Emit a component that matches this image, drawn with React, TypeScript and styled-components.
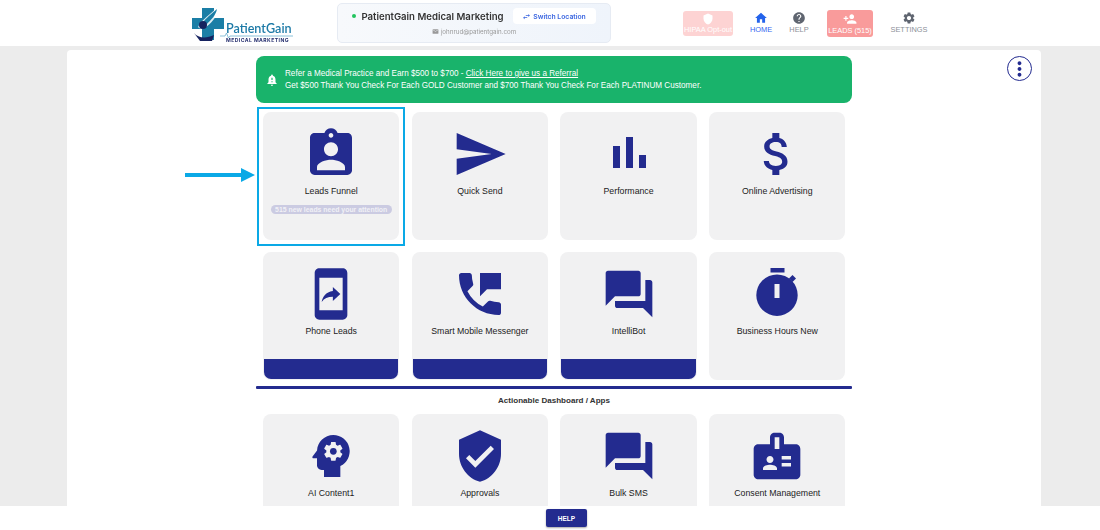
import React from "react";
import styled, { createGlobalStyle } from "styled-components";
import {
  MdAssignmentInd, MdSend, MdAttachMoney, MdMobileScreenShare, MdPermPhoneMsg,
  MdForum, MdPsychology, MdVerifiedUser, MdBadge, MdHome, MdHelp, MdPersonAdd,
  MdSettings, MdShield, MdNotificationImportant, MdSwapHoriz, MdEmail, MdMoreVert,
} from "react-icons/md";

const navy = "#232b8f";

const Global = createGlobalStyle`
  html, body { margin: 0; padding: 0; height: 100%; overflow: hidden; background: #fff; }
  body { font-family: "Liberation Sans", Arial, sans-serif; color: #222; }
  * { box-sizing: border-box; }
`;

const Page = styled.div`
  width: 1100px;
  height: 530px;
  display: flex;
  flex-direction: column;
  overflow: hidden;
`;

const Header = styled.header`
  height: 46px;
  flex: none;
  background: #fff;
  display: flex;
  align-items: center;
  padding-left: 190px;
`;

const LogoSvg = styled.svg`
  width: 104px;
  height: 40px;
  flex: none;
  filter: blur(0.3px);
`;

const LocationCard = styled.div`
  width: 274px;
  height: 40px;
  margin-left: 43px;
  flex: none;
  border: 1px solid #e6ebf3;
  border-radius: 5px;
  background: linear-gradient(90deg, #f7f9fc, #eff4fb);
  display: flex;
  flex-direction: column;
  align-items: center;
  padding-top: 4px;
  gap: 4px;
`;

const LocationRow = styled.div`
  display: flex;
  align-items: center;
`;

const Dot = styled.span`
  width: 4px;
  height: 4px;
  border-radius: 50%;
  background: #22c55e;
  margin-right: 5px;
`;

const LocationName = styled.span`
  font-family: Inter, sans-serif;
  font-size: 9.6px;
  font-weight: 600;
  color: #333;
  filter: blur(0.3px);
`;

const SwitchButton = styled.span`
  margin-left: 9px;
  width: 83px;
  height: 16px;
  background: #fff;
  border-radius: 4px;
  color: #3b66e0;
  font-family: Inter, sans-serif;
  font-size: 6.8px;
  font-weight: 600;
  display: flex;
  align-items: center;
  justify-content: center;
  gap: 2px;
  filter: blur(0.25px);
`;

const LocationEmail = styled.span`
  font-family: Inter, sans-serif;
  font-size: 6.2px;
  color: #999;
  display: flex;
  align-items: center;
  gap: 2px;
  filter: blur(0.4px);
`;

const HipaaBox = styled.div`
  width: 50px;
  height: 25px;
  margin-left: 72px;
  flex: none;
  border-radius: 3px;
  background: #fdd3d3;
  color: #fff;
  font-size: 7.4px;
  line-height: 9px;
  display: flex;
  flex-direction: column;
  align-items: center;
  justify-content: center;
`;

const NavItem = styled.div<{ $active?: boolean; $w: number; $ml: number }>`
  width: ${(p) => p.$w}px;
  margin-left: ${(p) => p.$ml}px;
  flex: none;
  display: flex;
  flex-direction: column;
  align-items: center;
  font-size: 7.4px;
  line-height: 9px;
  margin-top: -2px;
  color: ${(p) => (p.$active ? "#3466f0" : "#8b8f97")};
  svg { color: ${(p) => (p.$active ? "#2463eb" : "#5f6570")}; }
`;

const LeadsBox = styled.div`
  width: 46px;
  height: 27px;
  margin-left: 16px;
  flex: none;
  border-radius: 3px;
  background: #f99b9b;
  color: #fff;
  font-size: 7.4px;
  line-height: 9px;
  display: flex;
  flex-direction: column;
  align-items: center;
  justify-content: center;
`;

const Main = styled.main`
  height: 460px;
  flex: none;
  background: #ececec;
  padding: 4px 59px 0 67px;
  overflow: hidden;
`;

const Panel = styled.div`
  position: relative;
  height: 100%;
  background: #fff;
  border-radius: 4px 4px 0 0;
  overflow: hidden;
  padding-top: 6px;
`;

const MenuButton = styled.button`
  position: absolute;
  top: 6px;
  right: 9px;
  width: 25px;
  height: 25px;
  padding: 0;
  border: 1px solid ${navy};
  border-radius: 50%;
  background: #fff;
  color: ${navy};
  display: flex;
  align-items: center;
  justify-content: center;
`;

const Column = styled.div`
  width: 596px;
  margin: 0 auto;
`;

const Banner = styled.div`
  height: 47px;
  border-radius: 8px;
  background: #19b36b;
  color: #fff;
  display: flex;
  align-items: center;
  padding-left: 9px;
  gap: 6px;
  font-size: 8.14px;
  line-height: 11.5px;
  a { color: #fff; text-decoration: underline; }
`;

const Grid = styled.div`
  display: grid;
  grid-template-columns: repeat(4, 136.4px);
  column-gap: 12.3px;
  row-gap: 12px;
  padding-left: 7px;
`;

const TopGrid = styled(Grid)`
  margin-top: 9px;
`;

const Card = styled.div`
  position: relative;
  height: 128px;
  border-radius: 8px;
  background: #f1f1f2;
  display: flex;
  flex-direction: column;
  align-items: center;
  padding-top: 14px;
  color: ${navy};
`;

const CardLabel = styled.div`
  margin-top: 3px;
  font-size: 8.75px;
  line-height: 12px;
  color: #222;
`;

const Badge = styled.div`
  margin-top: 8px;
  width: 121px;
  height: 9px;
  border-radius: 5px;
  background: #cbcbe2;
  color: #f1f1f6;
  font-size: 6.9px;
  font-weight: 700;
  line-height: 9px;
  text-align: center;
  white-space: nowrap;
`;

const CardFoot = styled.div`
  position: absolute;
  left: 1px;
  right: 1px;
  bottom: 1px;
  height: 20px;
  background: ${navy};
  border-radius: 0 0 7px 7px;
`;

const Highlight = styled.div`
  position: absolute;
  left: -6px;
  right: -6px;
  top: -5px;
  bottom: -6px;
  border: 2px solid #0aa9e6;
  pointer-events: none;
`;

const ArrowSvg = styled.svg`
  position: absolute;
  left: -78px;
  top: 56px;
  width: 70px;
  height: 14px;
`;

const Divider = styled.div`
  height: 3px;
  margin-top: 6px;
  background: ${navy};
  border-radius: 1px;
`;

const SectionLabel = styled.div`
  margin: 7px 0 8px;
  height: 10px;
  font-size: 8.05px;
  font-weight: 700;
  line-height: 10px;
  text-align: center;
  color: #333;
`;

const Footer = styled.footer`
  height: 24px;
  flex: none;
  background: #fff;
  display: flex;
  justify-content: center;
  padding: 3px 0 0 33px;
`;

const HelpButton = styled.button`
  width: 41px;
  height: 18px;
  padding: 0;
  border: none;
  border-radius: 2px;
  background: ${navy};
  color: #fff;
  font-family: "Liberation Sans", sans-serif;
  font-size: 6.5px;
  font-weight: 700;
  box-shadow: 0 1px 2px rgba(0, 0, 0, 0.35);
`;

const Logo = () => (
  <LogoSvg viewBox="0 0 104 40">
    <path d="M12 2h12v10h10v11H24v11H12V23H2V12h10z" transform="translate(0 3)" fill="#1b7ea6" />
    <path d="M4 30c4 5 12 6 20 2l-2 6H10z" fill="#16225f" />
    <path d="M8 24c4-8 12-12 22-22-1 8-6 16-14 22-3 2-6 2-8 0z" fill="#fff" opacity=".85" />
    <path d="M11 22c3-5 8-9 16-16-1 6-6 11-11 16z" fill="#1b7ea6" />
    <circle cx="13" cy="22" r="4" fill="#16225f" />
    <path d="M30 33h5l1.5-3 2 5 1.500-2H103" fill="none" stroke="#5aa6c8" strokeWidth=".7" />
    <text x="36" y="29.500" fontFamily="Lato, sans-serif" fontSize="12.600" fontWeight="600" fill="#1b79a6">PatientGain</text>
    <text x="36" y="39" fontFamily="Inter, sans-serif" fontSize="5.100" fontWeight="700" letterSpacing=".43" fill="#27306f">MEDICAL MARKETING</text>
  </LogoSvg>
);

const BarsIcon = ({ size }: { size: number }) => (
  <svg width={size} height={size} viewBox="0 0 56 56" fill="currentColor">
    <rect x="12" y="20" width="7" height="22" />
    <rect x="25" y="11" width="7" height="31" />
    <rect x="38" y="29" width="7" height="13" />
  </svg>
);

const StopwatchIcon = ({ size }: { size: number }) => (
  <svg width={size} height={size} viewBox="0 0 56 56" fill="currentColor">
    <rect x="21.500" y="2" width="14" height="4.500" />
    <rect x="41" y="10" width="5" height="5" transform="rotate(45 43.500 12.500)" />
    <path fillRule="evenodd" d="M28 8.500a20.700 20.700 0 1 1 0 41.400a20.700 20.700 0 1 1 0-41.400zM25.500 18v14h5V18z" />
  </svg>
);

type Item = { icon: React.ElementType; label: string; foot?: boolean };

const top: Item[] = [
  { icon: MdAssignmentInd, label: "Leads Funnel" },
  { icon: MdSend, label: "Quick Send" },
  { icon: BarsIcon, label: "Performance" },
  { icon: MdAttachMoney, label: "Online Advertising" },
  { icon: MdMobileScreenShare, label: "Phone Leads", foot: true },
  { icon: MdPermPhoneMsg, label: "Smart Mobile Messenger", foot: true },
  { icon: MdForum, label: "IntelliBot", foot: true },
  { icon: StopwatchIcon, label: "Business Hours New" },
];

const apps: Item[] = [
  { icon: MdPsychology, label: "AI Content1" },
  { icon: MdVerifiedUser, label: "Approvals" },
  { icon: MdForum, label: "Bulk SMS" },
  { icon: MdBadge, label: "Consent Management" },
];

export default function App() {
  return (
    <Page>
      <Global />
      <Header>
        <Logo />
        <LocationCard>
          <LocationRow>
            <Dot />
            <LocationName>PatientGain Medical Marketing</LocationName>
            <SwitchButton><MdSwapHoriz size={9} />Switch Location</SwitchButton>
          </LocationRow>
          <LocationEmail><MdEmail size={7} />johnrud@patientgain.com</LocationEmail>
        </LocationCard>
        <HipaaBox><MdShield size={12} />HIPAA Opt-out</HipaaBox>
        <NavItem $active $w={30} $ml={13}><MdHome size={14} />HOME</NavItem>
        <NavItem $w={24} $ml={11}><MdHelp size={14} />HELP</NavItem>
        <LeadsBox><MdPersonAdd size={14} />LEADS (515)</LeadsBox>
        <NavItem $w={40} $ml={16}><MdSettings size={14} />SETTINGS</NavItem>
      </Header>
      <Main>
        <Panel>
          <MenuButton aria-label="More"><MdMoreVert size={24} /></MenuButton>
          <Column>
            <Banner>
              <MdNotificationImportant size={14} />
              <div>
                Refer a Medical Practice and Earn $500 to $700 - <a href="#r">Click Here to give us a Referral</a>
                <br />
                Get $500 Thank You Check For Each GOLD Customer and $700 Thank You Check For Each PLATINUM Customer.
              </div>
            </Banner>
            <TopGrid>
              {top.map(({ icon: Icon, label, foot }, i) => (
                <Card key={label}>
                  <Icon size={56} />
                  <CardLabel>{label}</CardLabel>
                  {i === 0 && <Badge>515 new leads need your attention</Badge>}
                  {foot && <CardFoot />}
                  {i === 0 && <Highlight />}
                  {i === 0 && (
                    <ArrowSvg viewBox="0 0 70 14">
                      <path d="M0 5h56V0l14 7-14 7V9H0z" fill="#0aa9e6" />
                    </ArrowSvg>
                  )}
                </Card>
              ))}
            </TopGrid>
            <Divider />
            <SectionLabel>Actionable Dashboard / Apps</SectionLabel>
            <Grid>
              {apps.map(({ icon: Icon, label }) => (
                <Card key={label}>
                  <Icon size={56} />
                  <CardLabel>{label}</CardLabel>
                </Card>
              ))}
            </Grid>
          </Column>
        </Panel>
      </Main>
      <Footer>
        <HelpButton>HELP</HelpButton>
      </Footer>
    </Page>
  );
}
